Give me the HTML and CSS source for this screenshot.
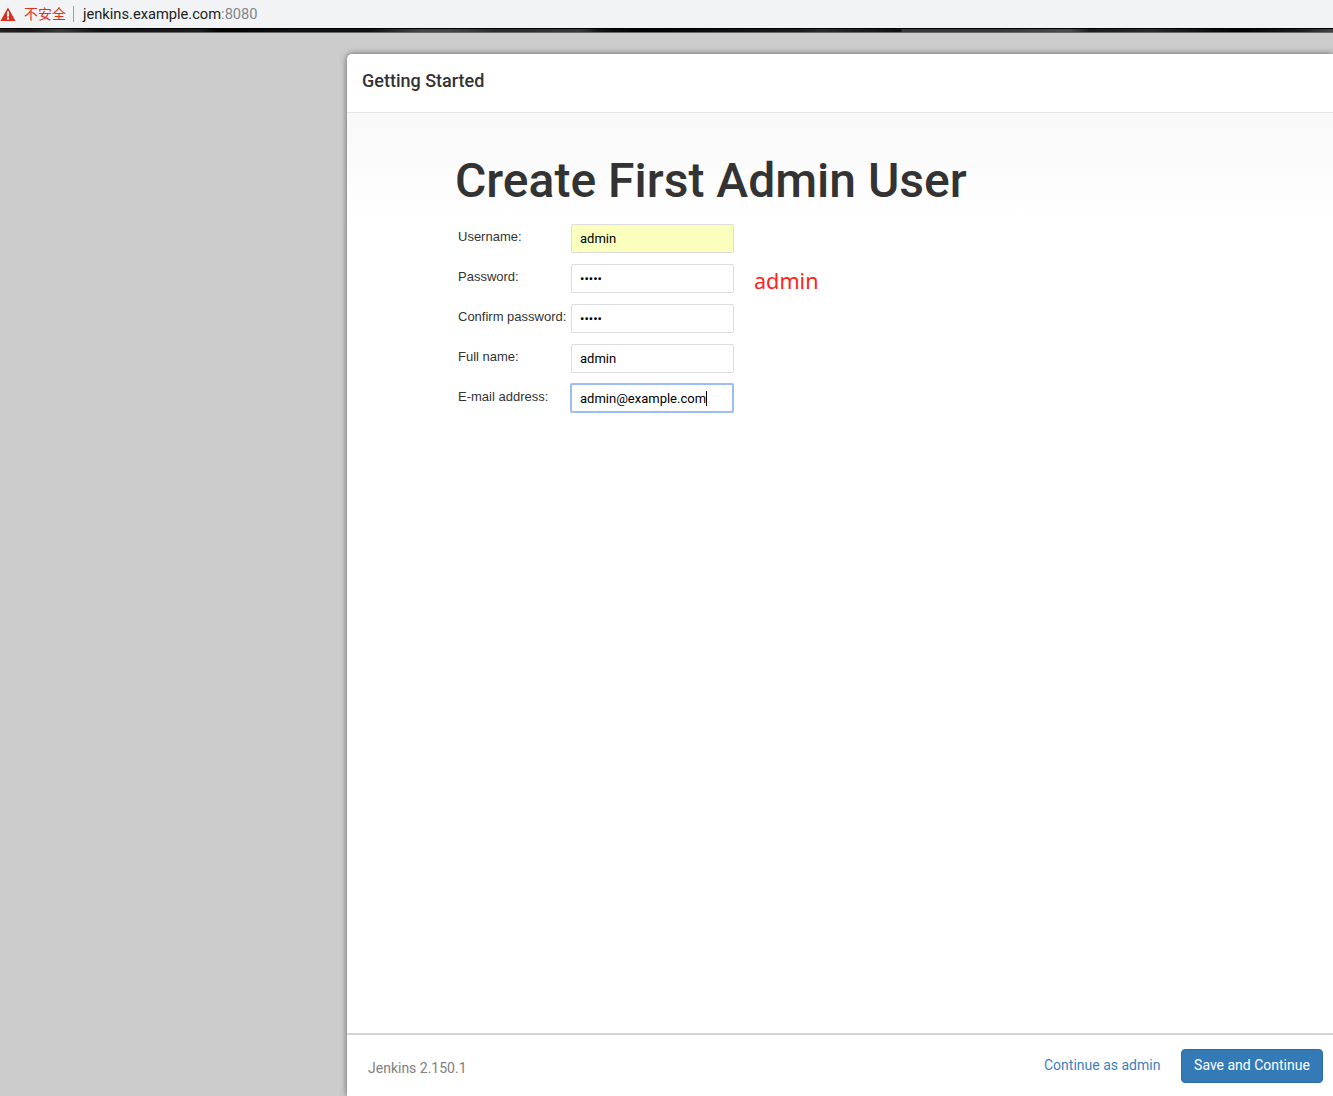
FILE: index.html
```html
<!DOCTYPE html>
<html lang="en">
<head>
<meta charset="utf-8">
<title>Create First Admin User</title>
<link rel="stylesheet" href="styles.css">
</head>
<body>
<div class="page">
  <div class="addressbar">
    <svg class="warn" width="16" height="14" viewBox="0 0 16 14"><path d="M8 0.5 L15.6 14 H0.4 Z" fill="#d93025"/><rect x="7" y="4.5" width="2" height="5" fill="#fff"/><rect x="7" y="10.5" width="2" height="2" fill="#fff"/></svg>
    <span class="insecure">不安全</span>
    <span class="sep"></span>
    <span class="url">jenkins.example.com<span class="port">:8080</span></span>
  </div>
  <div class="edge"></div>
  <div class="backdrop">
    <div class="dialog">
      <div class="dialog-header">Getting Started</div>
      <div class="dialog-body">
        <h1 class="title">Create First Admin User</h1>
        <form class="form">
          <div class="row"><label class="label">Username:</label><div class="input autofill">admin</div></div>
          <div class="row"><label class="label">Password:</label><div class="input">•••••</div><span class="note">admin</span></div>
          <div class="row"><label class="label">Confirm password:</label><div class="input">•••••</div></div>
          <div class="row"><label class="label">Full name:</label><div class="input">admin</div></div>
          <div class="row"><label class="label">E-mail address:</label><div class="input focused">admin@example.com<span class="caret"></span></div></div>
        </form>
      </div>
      <div class="dialog-footer">
        <span class="version">Jenkins 2.150.1</span>
        <a class="skip">Continue as admin</a>
        <button class="save" type="button">Save and Continue</button>
      </div>
    </div>
  </div>
</div>
</body>
</html>
```
FILE: styles.css
```css
* { box-sizing: border-box; }
html, body { margin: 0; padding: 0; }
body { font-family: Roboto, "Liberation Sans", sans-serif; color: #333; }
.page { width: 1333px; height: 1096px; display: flex; flex-direction: column; overflow: hidden; background: #ccc; }
.addressbar { height: 28px; flex: none; background: #f1f3f4; display: flex; align-items: center; padding-left: 0; }
.warn { flex: none; margin-right: 8px; }
.insecure { font: 14px/28px "Noto Sans CJK SC", sans-serif; color: #e0301e; width: 42px; white-space: nowrap; margin-top: -2px; }
.sep { width: 1px; height: 16px; background: #9aa0a6; margin: 0 9px 0 7px; }
.url { font: 14.67px Roboto, sans-serif; color: #202124; }
.port { color: #80868b; }
.edge { height: 5px; flex: none; border-top: 1px solid #000; border-bottom: 1px solid #666; background: linear-gradient(90deg, #222 0, #1a1a1a 30px, #3a3a3a 60px, #111 100px, #1c1c1c 200px, #000 220px, #111 300px, #111 370px, #444 420px, #444 450px, #2a2a2a 500px, #383838 580px, #111 600px, #000 640px, #1c1c1c 800px, #2a2a2a 820px, #111 900px, #111 901px, #383838 902px, #383838 1000px, #4a4a4a 1070px, #1c1c1c 1090px, #2a2a2a 1150px, #111 1200px, #000 1240px, #1c1c1c 1300px, #444 1333px); }
.backdrop { flex: 1; min-height: 0; padding: 21px 0 0 347px; display: flex; }
.dialog { width: 1100px; background: #fff; border-radius: 5px 0 0 0; display: flex; flex-direction: column; box-shadow: 0 0 6px rgba(0,0,0,.55); }
.dialog-header { height: 59px; flex: none; border-bottom: 1px solid #e5e5e5; padding: 15px 15px 0; font-size: 18px; font-weight: 500; line-height: 24px; }
.dialog-body { flex: 1; padding: 0 0 0 109px; background: linear-gradient(#f8f8f8, #fff 110px); }
.title { margin: 39px 0 15px -1px; font-size: 48px; line-height: 57px; font-weight: 500; color: #333; white-space: nowrap; }
.form { display: flex; flex-direction: column; gap: 11px; }
.row { display: flex; align-items: flex-start; height: 29px; }
.label { width: 115px; flex: none; padding: 5px 0 0 2px; font-size: 13px; line-height: 16px; color: #333; font-family: "Liberation Sans", sans-serif; white-space: nowrap; }
.input { width: 163px; height: 29px; flex: none; border: 1px solid #ddd; border-radius: 2px; background: #fff; padding: 0 8px; font-size: 13px; line-height: 27px; color: #000; white-space: nowrap; }
.autofill { background: #faffbd; }
.focused { width: 164px; height: 30px; margin: -1px 0 0 -1px; border: 2px solid #9cbcf5; line-height: 28px; }
.caret { display: inline-block; width: 1px; height: 15px; background: #000; vertical-align: -3px; }
.note { margin: 3px 0 0 20px; font: 21.6px/28px "Noto Sans", sans-serif; color: #f22; }
.dialog-footer { height: 63px; flex: none; border-top: 2px solid #d5d5d5; display: flex; align-items: flex-start; padding-left: 21px; }
.version { font-size: 14px; line-height: 20px; color: #808080; margin-top: 23px; width: 676px; }
.skip { font-size: 14px; line-height: 20px; color: #3f7fbb; margin-top: 20px; width: 137px; }
.save { width: 142px; height: 34px; margin-top: 14px; border: 1px solid #2e6da4; border-radius: 4px; background: #337ab7; color: #fff; font: 14px/30px Roboto, sans-serif; padding: 0 0 2px; }
```
